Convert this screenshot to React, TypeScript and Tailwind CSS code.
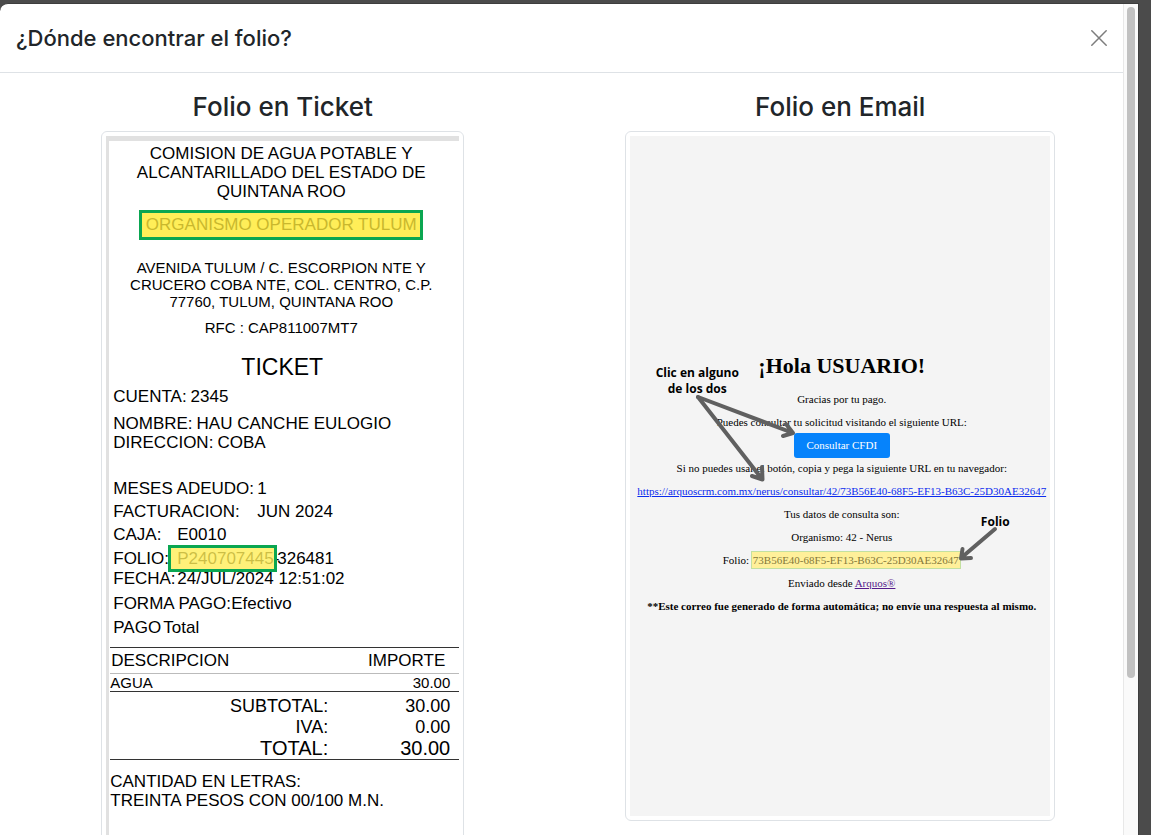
import type { ReactNode } from 'react';

function Field({ label, labelClass, children }: { label: string; labelClass: string; children: ReactNode }) {
  return (
    <div className="flex">
      <dt className={`shrink-0 ${labelClass}`}>{label}</dt>
      <dd className="whitespace-nowrap">{children}</dd>
    </div>
  );
}

function Ticket() {
  return (
    <div className="h-[740px] w-full border-t-[5px] border-l-[3px] border-[#e1e1e1] bg-white font-['Liberation_Sans',Arial,sans-serif] text-[17px] leading-[19px] text-black">
      <div className="flex flex-col items-center pt-[3px] pr-1.5 text-center">
        <p>
          COMISION DE AGUA POTABLE Y
          <br />
          ALCANTARILLADO DEL ESTADO DE
          <br />
          QUINTANA ROO
        </p>
        <p className="mt-[9px] w-[284px] border-[3px] border-[#0aa651] bg-[#ffee58] leading-[24px] whitespace-nowrap text-[#c9b82e]">
          ORGANISMO OPERADOR TULUM
        </p>
        <p className="mt-[19px] text-[15px] leading-[17px]">
          AVENIDA TULUM / C. ESCORPION NTE Y
          <br />
          CRUCERO COBA NTE, COL. CENTRO, C.P.
          <br />
          77760, TULUM, QUINTANA ROO
        </p>
        <p className="mt-[9px] text-[15px] leading-[17px]">RFC : CAP811007MT7</p>
      </div>
      <h3 className="mt-[17px] pr-1 text-center text-[23px] leading-[28px]">TICKET</h3>
      <dl className="pt-[6px] pl-1">
        <Field label="CUENTA:" labelClass="pr-1">2345</Field>
        <div className="h-2" />
        <Field label="NOMBRE:" labelClass="pr-1">HAU CANCHE EULOGIO</Field>
        <Field label="DIRECCION:" labelClass="pr-1">COBA</Field>
        <div className="mt-[27px] flex flex-col gap-1">
          <Field label="MESES ADEUDO:" labelClass="w-36">1</Field>
          <Field label="FACTURACION:" labelClass="w-36">JUN 2024</Field>
          <Field label="CAJA:" labelClass="w-16">E0010</Field>
        </div>
        <div className="mt-[5px] flex flex-col gap-px">
          <Field label="FOLIO:" labelClass="w-16">
            <span className="relative inline-block w-[100px]">
              P240707445-
              <span className="absolute -top-1 -left-[9px] h-[27px] w-[109px] border-[3px] border-[#0aa651] bg-[#ffee58]/80" />
            </span>
            326481
          </Field>
          <Field label="FECHA:" labelClass="w-16">24/JUL/2024 12:51:02</Field>
        </div>
        <div className="mt-[6px] flex flex-col gap-[5px]">
          <Field label="FORMA PAGO:" labelClass="w-[118px]">Efectivo</Field>
          <Field label="PAGO" labelClass="w-[50px]">Total</Field>
        </div>
      </dl>
      <div className="mt-[10px] pl-px">
        <table className="w-full border-collapse">
          <thead>
            <tr className="h-[26px] border-t border-b border-t-[#333] border-b-[#bbb]">
              <th className="pl-px text-left font-normal">DESCRIPCION</th>
              <th className="pr-[14px] text-right font-normal">IMPORTE</th>
            </tr>
          </thead>
          <tbody className="text-[15px] leading-[17px]">
            <tr className="h-[18px] border-b border-[#333]">
              <td>AGUA</td>
              <td className="pr-[9px] text-right">30.00</td>
            </tr>
          </tbody>
        </table>
        <table className="w-full border-b border-[#333] text-right text-[18px] leading-[21px]">
          <tbody>
            <tr>
              <th className="w-[218px] pt-1 font-normal">SUBTOTAL:</th>
              <td className="pt-1 pr-[9px]">30.00</td>
            </tr>
            <tr>
              <th className="font-normal">IVA:</th>
              <td className="pr-[9px]">0.00</td>
            </tr>
            <tr className="text-[20px]">
              <th className="font-normal">TOTAL:</th>
              <td className="pr-[9px]">30.00</td>
            </tr>
          </tbody>
        </table>
        <p className="mt-3">
          CANTIDAD EN LETRAS:
          <br />
          TREINTA PESOS CON 00/100 M.N.
        </p>
      </div>
    </div>
  );
}

function Email() {
  return (
    <div className="relative h-[680px] w-full bg-[#f4f4f4] pt-[216px] pl-[3px] text-center font-['Liberation_Serif','Times_New_Roman',serif] text-[11px] leading-[23px] whitespace-nowrap text-black">
      <h3 className="mb-2 text-[22px] leading-[28px] font-bold">¡Hola USUARIO!</h3>
      <p>Gracias por tu pago.</p>
      <p>Puedes consultar tu solicitud visitando el siguiente URL:</p>
      <div className="flex h-[23px] items-center justify-center">
        <button type="button" className="h-[25px] w-24 shrink-0 rounded-[3px] bg-[#0683fb] text-white">
          Consultar CFDI
        </button>
      </div>
      <p>Si no puedes usar el botón, copia y pega la siguiente URL en tu navegador:</p>
      <p>
        <a href="#consulta" className="text-[#0a2bee] underline">
          https://arquoscrm.com.mx/nerus/consultar/42/73B56E40-68F5-EF13-B63C-25D30AE32647
        </a>
      </p>
      <p>Tus datos de consulta son:</p>
      <p>Organismo: 42 - Nerus</p>
      <p>
        Folio:{' '}
        <mark className="-ml-px border border-[#c3e0a0] bg-[#fff09a] px-px py-[2px] text-[#85793a]">
          73B56E40-68F5-EF13-B63C-25D30AE32647
        </mark>
      </p>
      <p>
        Enviado desde{' '}
        <a href="#arquos" className="text-[#551a8b] underline">
          Arquos®
        </a>
      </p>
      <p className="font-bold">**Este correo fue generado de forma automática; no envíe una respuesta al mismo.</p>

      <svg
        className="absolute inset-0 h-full w-full"
        viewBox="0 0 420 680"
        fill="none"
        stroke="#606060"
        strokeWidth="4"
        strokeLinecap="round"
        strokeLinejoin="round"
        pointerEvents="none"
        aria-hidden="true"
      >
        <path d="M68 261 L163 297 M156 288 L163 297 L153 300" />
        <path d="M68 261 L132 343 M132 331 L132.500 343.500 L122 340" />
        <path d="M365 393 L331 422 M332.500 413 L331 422.500 L341 422" />
      </svg>
      <p className="absolute top-[229px] left-[17px] w-[100px] font-['Open_Sans',sans-serif] text-[12px] leading-4 font-bold">
        Clic en alguno
        <br />
        de los dos
      </p>
      <p className="absolute top-[378px] left-[340px] w-[50px] font-['Open_Sans',sans-serif] text-[12px] leading-4 font-bold">
        Folio
      </p>
    </div>
  );
}

export default function App() {
  return (
    <div className="flex h-screen overflow-hidden bg-[#4b4b4b] pt-[3px] pr-3 font-['Inter',sans-serif] text-[#212529]">
      <div
        role="dialog"
        aria-labelledby="dialog-title"
        className="flex min-w-0 flex-1 overflow-hidden rounded-tl-lg border-t border-r border-[#3d3d3d] bg-white"
      >
        <div className="min-w-0 flex-1">
          <header className="flex h-[69px] items-center justify-between border-b border-[#dee2e6] px-4">
            <h1 id="dialog-title" className="text-[22px] leading-[30px] font-medium">
              ¿Dónde encontrar el folio?
            </h1>
            <button type="button" aria-label="Cerrar" className="text-[#7d7d7d]">
              <svg width="16" height="16" viewBox="0 0 16 16" fill="none" stroke="currentColor" strokeWidth="1.500" strokeLinecap="round">
                <path d="M0.800 0.800 L15.200 15.200 M15.200 0.800 L0.800 15.200" />
              </svg>
            </button>
          </header>
          <main className="grid grid-cols-2 px-1 pt-4">
            <section className="flex flex-col items-center">
              <h2 className="mb-1.5 text-[26px] leading-[36px] font-medium">Folio en Ticket</h2>
              <div className="w-[363px] max-w-full rounded-md border border-[#dee2e6] p-1">
                <Ticket />
              </div>
            </section>
            <section className="flex flex-col items-center">
              <h2 className="mb-1.5 text-[26px] leading-[36px] font-medium">Folio en Email</h2>
              <div className="w-[430px] max-w-full rounded-md border border-[#dee2e6] p-1">
                <Email />
              </div>
            </section>
          </main>
        </div>
        <div className="flex w-[15px] shrink-0 justify-center border-l border-[#e8e8e8] bg-[#fafafa] pt-[3px]" aria-hidden="true">
          <div className="h-[81%] w-2 rounded-full bg-[#c1c1c1]" />
        </div>
      </div>
    </div>
  );
}
